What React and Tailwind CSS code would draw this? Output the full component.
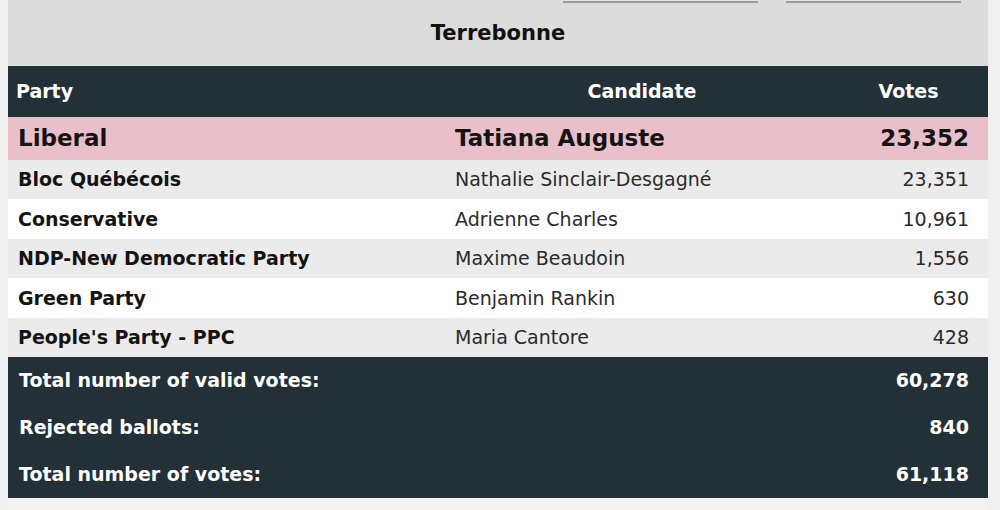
const rows = [
    { party: 'Bloc Québécois', candidate: 'Nathalie Sinclair-Desgagné', votes: '23,351', bg: 'bg-[#ebebeb]', h: 'h-[39px]' },
    { party: 'Conservative', candidate: 'Adrienne Charles', votes: '10,961', bg: 'bg-white', h: 'h-[40px]' },
    { party: 'NDP-New Democratic Party', candidate: 'Maxime Beaudoin', votes: '1,556', bg: 'bg-[#ebebeb]', h: 'h-[39px]' },
    { party: 'Green Party', candidate: 'Benjamin Rankin', votes: '630', bg: 'bg-white', h: 'h-[40px]' },
    { party: "People's Party - PPC", candidate: 'Maria Cantore', votes: '428', bg: 'bg-[#ebebeb]', h: 'h-[39px]' },
];

const totals = [
    { label: 'Total number of valid votes:', value: '60,278' },
    { label: 'Rejected ballots:', value: '840' },
    { label: 'Total number of votes:', value: '61,118' },
];

export default function App() {
    return (
        <div className="w-[1000px] h-[510px] overflow-hidden bg-[#f0f0f0] pl-[8px] pr-[12px] font-['DejaVu_Sans',Verdana,sans-serif]">
            <div className="bg-[#dcdcdc]">
                {/* Buttons cut off at top */}
                <div className="flex h-[3px] items-end">
                    <div className="ml-[555px] w-[195px] h-[3px] bg-[#e6e6e6] border-b-2 border-[#9a9a9a]" />
                    <div className="ml-[28px] w-[175px] h-[3px] bg-[#e6e6e6] border-b-2 border-[#9a9a9a]" />
                </div>

                {/* Title */}
                <div className="h-[63px] flex items-center justify-center pb-[1px]">
                    <h2 className="text-[21px] font-bold text-[#111]">Terrebonne</h2>
                </div>

                {/* Header */}
                <div className="h-[51px] bg-[#243037] text-white text-[19px] font-bold flex items-center">
                    <div className="w-[447px] pl-[8px]">Party</div>
                    <div className="w-[374px] text-center">Candidate</div>
                    <div className="flex-1 text-center">Votes</div>
                </div>

                {/* Winner */}
                <div className="h-[43px] bg-[#e9bfca] text-[#141414] text-[23px] font-bold flex items-center">
                    <div className="w-[447px] pl-[10px]">Liberal</div>
                    <div className="w-[374px]">Tatiana Auguste</div>
                    <div className="flex-1 text-right pr-[19px]">23,352</div>
                </div>

                {rows.map(r => (
                    <div key={r.party} className={`${r.h} ${r.bg} text-[19px] flex items-center`}>
                        <div className="w-[447px] pl-[10px] font-bold text-[#141414]">{r.party}</div>
                        <div className="w-[374px] text-[#2b2b2b]">{r.candidate}</div>
                        <div className="flex-1 text-right pr-[19px] text-[#2b2b2b]">{r.votes}</div>
                    </div>
                ))}

                {/* Totals */}
                <div className="bg-[#243037] text-white text-[19px] font-bold">
                    {totals.map(t => (
                        <div key={t.label} className="h-[47px] flex items-center justify-between pl-[11px] pr-[19px]">
                            <span>{t.label}</span>
                            <span>{t.value}</span>
                        </div>
                    ))}
                </div>
                <div className="h-[12px] bg-[#f2f2f2]" />
            </div>
        </div>
    );
}
